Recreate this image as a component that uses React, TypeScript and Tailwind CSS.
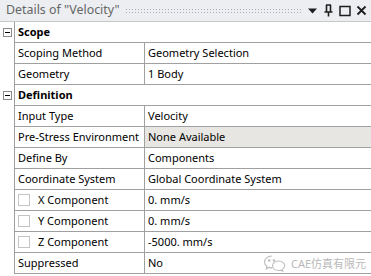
import React from 'react'

type Row =
  | { kind: 'header'; label: string }
  | { kind: 'prop'; label: string; value: string; check?: boolean; shaded?: boolean }

const rows: Row[] = [
  { kind: 'header', label: 'Scope' },
  { kind: 'prop', label: 'Scoping Method', value: 'Geometry Selection' },
  { kind: 'prop', label: 'Geometry', value: '1 Body' },
  { kind: 'header', label: 'Definition' },
  { kind: 'prop', label: 'Input Type', value: 'Velocity' },
  { kind: 'prop', label: 'Pre-Stress Environment', value: 'None Available', shaded: true },
  { kind: 'prop', label: 'Define By', value: 'Components' },
  { kind: 'prop', label: 'Coordinate System', value: 'Global Coordinate System' },
  { kind: 'prop', label: 'X Component', value: '0. mm/s', check: true },
  { kind: 'prop', label: 'Y Component', value: '0. mm/s', check: true },
  { kind: 'prop', label: 'Z Component', value: '-5000. mm/s', check: true },
  { kind: 'prop', label: 'Suppressed', value: 'No' },
]

function Toggle() {
  return (
    <div className="w-[9px] h-[9px] border border-[#8a8a8a] bg-white flex items-center justify-center">
      <div className="w-[5px] h-px bg-black" />
    </div>
  )
}

export default function App() {
  return (
    <div
      className="relative w-[371px] h-[276px] bg-white overflow-hidden text-[11px] text-black"
      style={{ fontFamily: '"Noto Sans", "Open Sans", sans-serif' }}
    >
      {/* title bar */}
      <div className="h-[22px] flex items-center bg-[#eceef1] border-b border-[#c8c8c8] pl-[6px] pr-[4px]">
        <span className="text-[12.4px] text-[#666666] leading-none whitespace-nowrap">Details of "Velocity"</span>
        <div className="flex-1 mx-[5px] h-[6px] bg-[radial-gradient(circle,#a9adb3_0.7px,transparent_0.9px)] bg-[length:3px_3px]" />
        <div className="flex items-center gap-[5px]">
          <svg width="11" height="11" viewBox="0 0 11 11">
            <path d="M1 3.5 H10 L5.5 8.5 Z" fill="#1e1e1e" />
          </svg>
          <svg width="11" height="13" viewBox="0 0 11 13">
            <path d="M3 1 H8 M3.5 1 V8 M7.5 1 V8 M1.5 8 H9.5 M5.5 8 V12.5" stroke="#1e1e1e" strokeWidth="1.6" fill="none" />
          </svg>
          <svg width="12" height="12" viewBox="0 0 12 12">
            <rect x="1" y="1.5" width="10" height="9" stroke="#1e1e1e" strokeWidth="1.5" fill="none" />
          </svg>
          <svg width="11" height="11" viewBox="0 0 11 11">
            <path d="M1.5 1.5 L9.5 9.5 M9.5 1.5 L1.5 9.5" stroke="#1e1e1e" strokeWidth="1.8" />
          </svg>
        </div>
      </div>

      {/* property grid */}
      <div className="flex flex-col">
        {rows.map((r) => (
          <div key={r.label} className="flex h-[21px]">
            <div className="w-[14px] shrink-0 flex items-center justify-center">
              {r.kind === 'header' && <Toggle />}
            </div>
            {r.kind === 'header' ? (
              <div className="flex-1 flex items-center border-l border-b border-[#a0a0a0] pl-[3px] font-bold">
                {r.label}
              </div>
            ) : (
              <div className="flex-1 flex border-l border-b border-[#a0a0a0]">
                <div className="w-[130px] shrink-0 flex items-center border-r border-[#a0a0a0] pl-[3px] whitespace-nowrap overflow-hidden">
                  {r.check && <div className="w-[12px] h-[12px] border border-[#c4c4c4] bg-white mr-[8px] shrink-0" />}
                  {r.label}
                </div>
                <div className={`flex-1 flex items-center pl-[3px] whitespace-nowrap ${r.shaded ? 'bg-[#e7e6e2]' : ''}`}>
                  {r.value}
                </div>
              </div>
            )}
          </div>
        ))}
      </div>

      {/* watermark */}
      <div className="absolute left-[263px] top-[254px] flex items-center gap-[4px] text-[#b9b9b9]">
        <svg width="24" height="18" viewBox="0 0 24 18" fill="none" stroke="#bdbdbd" strokeWidth="1.1">
          <path d="M9 2 C4.5 2 1.5 4.8 1.5 8 C1.5 9.9 2.5 11.4 4 12.5 L3.3 14.8 L6 13.4 C7 13.7 8 13.9 9 13.9" />
          <path d="M15.5 7 C12 7 9.5 9.2 9.5 11.8 C9.5 14.4 12 16.5 15.5 16.5 C16.3 16.5 17 16.4 17.7 16.2 L19.8 17.2 L19.3 15.4 C20.8 14.5 21.7 13.2 21.7 11.8 C21.7 9.2 19 7 15.5 7 Z" />
          <circle cx="6.3" cy="6.5" r="0.8" fill="#bdbdbd" />
          <circle cx="11" cy="6.5" r="0.8" fill="#bdbdbd" />
        </svg>
        <span className="text-[11px] leading-none" style={{ fontFamily: '"Noto Sans", "Noto Sans CJK SC", sans-serif' }}>
          CAE仿真有限元
        </span>
      </div>
    </div>
  )
}
